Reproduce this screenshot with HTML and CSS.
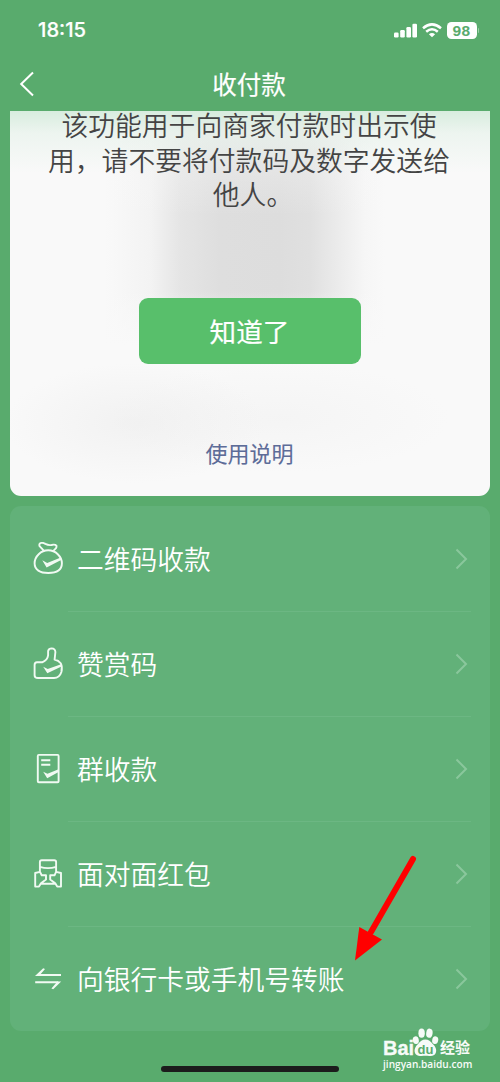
FILE: index.html
```html
<!DOCTYPE html>
<html lang="zh-CN">
<head>
<meta charset="utf-8">
<title>收付款</title>
<link rel="stylesheet" href="styles.css">
</head>
<body>
<div class="phone">
  <div class="status">
    <span class="time">18:15</span>
    <div class="indicators">
      <svg class="signal" width="24" height="15" viewBox="0 0 24 15" fill="#fff"><rect x="0" y="9.5" width="4.6" height="5" rx="1.2"/><rect x="6.2" y="7" width="4.6" height="7.5" rx="1.2"/><rect x="12.4" y="4" width="4.6" height="10.5" rx="1.2"/><rect x="18.4" y="0.8" width="4.6" height="13.7" rx="1.2"/></svg>
      <svg class="wifi" width="20" height="15" viewBox="0 0 20 15" fill="none" stroke="#fff" stroke-width="2.5"><path d="M1 5.2Q10 -2.5 19 5.2"/><path d="M4.2 8.8Q10 3.8 15.8 8.8"/><path d="M10 14.2L6.9 11.2Q10 8.8 13.1 11.2Z" fill="#fff" stroke="none"/></svg>
      <span class="battery">98</span>
      <span class="battery-cap"></span>
    </div>
  </div>
  <div class="navbar">
    <svg class="back" width="16" height="26" viewBox="0 0 16 26" fill="none" stroke="#fff" stroke-width="2"><path d="M14 1.5L2.2 13L14 24.5"/></svg>
    <h1 class="title">收付款</h1>
  </div>
  <section class="notice">
    <div class="message">
      <span class="line">该功能用于向商家付款时出示使</span>
      <span class="line">用，请不要将付款码及数字发送给</span>
      <span class="line last">他人。</span>
    </div>
    <button class="confirm">知道了</button>
    <a class="help">使用说明</a>
  </section>
  <section class="menu">
    <div class="row">
      <svg class="icon" viewBox="0 0 32 32"><path d="M11 8.8L6.6 4.2Q5.6 1.4 8.4 .9Q10.4 .6 12.4 1.9Q15.5 3.6 18.5 3Q22 2.1 23.4 3.6Q23.8 5 22.8 6.4L20.4 8.8M15.2 8.3C22.5 8.3 28.9 14.4 28.9 21.3C28.9 28 23.4 31 15.2 31S1.6 28 1.6 21.3C1.6 14.4 8 8.3 15.2 8.3Z"/><path class="solid" d="M9.3 18.3L14.2 21.1L27.8 15.6L28.6 17.8L13.6 25.6Z"/></svg>
      <span class="label">二维码收款</span>
      <svg class="chevron" viewBox="0 0 13 22"><path d="M1.5 1.5L11 11L1.5 20.5"/></svg>
    </div>
    <div class="row">
      <svg class="icon" viewBox="0 0 32 32"><path d="M4 15.3H9.2Q14.5 13 15.1 8.3V4Q15.8 1.4 18.7 1.4Q22.1 1.5 22.4 5L21.6 12.6Q25.5 13.3 27.7 16.2Q29.6 20 28.4 25Q26.5 31 21 31H5Q1.6 31 1.6 28.2V18Q1.6 15.3 4 15.3Z"/><path class="solid" d="M10.2 19.8L14.7 22L28.1 17.2L28.5 19.4L14.3 26.3Z"/></svg>
      <span class="label">赞赏码</span>
      <svg class="chevron" viewBox="0 0 13 22"><path d="M1.5 1.5L11 11L1.5 20.5"/></svg>
    </div>
    <div class="row">
      <svg class="icon" viewBox="0 0 32 32"><rect x="4.8" y="2.9" width="20.8" height="27.4" rx="1"/><path d="M8.2 8.2H17.3M8.2 12.8H17.3"/><path class="solid" d="M10.2 19.8L14.5 21.8L25.6 17.3V20L14.2 26.2Z"/></svg>
      <span class="label">群收款</span>
      <svg class="chevron" viewBox="0 0 13 22"><path d="M1.5 1.5L11 11L1.5 20.5"/></svg>
    </div>
    <div class="row">
      <svg class="icon" viewBox="0 0 32 32"><path d="M6.9 16V5Q6.9 3.2 8.7 3.2H21.3Q23.1 3.2 23.1 5V16M6.9 9.8Q15 12.4 23.1 9.8M6.9 14.8L2.2 16V29.6H6L8 26.3L13 22.5V18.3H8.7L6.9 14.8M23.1 14.8L28 16V29.6H24.2L22.2 26.3L17.2 22.5V18.3H21.5L23.1 14.8M8 26.7H22.2"/></svg>
      <span class="label">面对面红包</span>
      <svg class="chevron" viewBox="0 0 13 22"><path d="M1.5 1.5L11 11L1.5 20.5"/></svg>
    </div>
    <div class="row">
      <svg class="icon" viewBox="0 0 32 32"><path d="M28 13H5.2M2.2 20.3H25.2" stroke-width="2"/><path class="solid" d="M2 13.9L10.2 6.2L12 7L6 13.9ZM28.2 19.4L20.2 27.2L18.4 26.5L24.4 19.4Z"/></svg>
      <span class="label">向银行卡或手机号转账</span>
      <svg class="chevron" viewBox="0 0 13 22"><path d="M1.5 1.5L11 11L1.5 20.5"/></svg>
    </div>
  </section>
  <svg class="pointer" width="64" height="108" viewBox="0 0 64 108"><path d="M60 6L18 79" stroke="#f00" stroke-width="6" stroke-linecap="round"/><path d="M2 107.5L6.3 74L29 86.4Z" fill="#f00"/></svg>
  <div class="brand">
    <div class="brand-name">
      <span class="brand-latin">Bai</span>
      <svg class="paw" width="27" height="29" viewBox="0 0 27 29" fill="#f7fbf8"><ellipse cx="3.8" cy="12.2" rx="3" ry="3.9" transform="rotate(-12 3.8 12.2)"/><ellipse cx="9.6" cy="5.2" rx="3.2" ry="4.6"/><ellipse cx="17.4" cy="5.2" rx="3.2" ry="4.6" transform="rotate(8 17.4 5.2)"/><ellipse cx="23.2" cy="12.2" rx="3" ry="3.9" transform="rotate(12 23.2 12.2)"/><path d="M13.4 11.5C16.6 11.5 18.5 13.5 21 16.2C24.8 19.8 25 24 22.8 26.4C20.4 28.6 16 27.8 13.4 27.8S6.4 28.6 4 26.4C1.8 24 2 19.8 5.8 16.2C8.3 13.5 10.2 11.5 13.4 11.5Z"/><text x="13.4" y="25.6" text-anchor="middle" class="paw-text">du</text></svg>
      <span class="brand-cn">经验</span>
    </div>
    <div class="brand-url">jingyan.baidu.com</div>
  </div>
  <div class="home-indicator"></div>
</div>
</body>
</html>
```
FILE: styles.css
```css
* { box-sizing: border-box; }
body { margin: 0; background: #59ab6d; font-family: "Noto Sans CJK SC", sans-serif; }
.phone { position: relative; width: 500px; height: 1082px; overflow: hidden; background: #59ab6d; }
.status { height: 60px; padding: 0 21px 0 38px; display: flex; align-items: center; justify-content: space-between; }
.time { font: 500 20.2px/24px Inter, sans-serif; color: #fff; -webkit-text-stroke: .2px #fff; }
.indicators { display: flex; align-items: center; }
.wifi { margin-left: 4px; }
.battery { width: 30px; height: 17px; margin-left: 5px; border-radius: 4.5px; background: #fff; color: #59ab6d; font: 700 15.5px/17px "Liberation Sans", sans-serif; letter-spacing: .4px; text-align: center; }
.battery-cap { width: 1.5px; height: 5px; margin-left: 1px; border-radius: 0 2px 2px 0; background: #9bcda6; }
.navbar { position: relative; height: 51px; display: flex; justify-content: center; align-items: center; }
.back { position: absolute; left: 19px; top: 11px; }
.title { margin: 0; padding: 0 2px 4px 0; font-size: 24.5px; line-height: 36px; font-weight: 400; color: #fff; -webkit-text-stroke: .2px #fff; }
.notice {
  width: 480px; height: 385px; margin-left: 10px; border-radius: 0 0 11px 11px;
  display: flex; flex-direction: column; align-items: center;
  background:
    linear-gradient(to bottom, rgba(214, 236, 221, .95), rgba(225, 240, 230, .5) 22px, rgba(249, 249, 249, 0) 62px),
    radial-gradient(ellipse 130px 60px at 125px 312px, rgba(230, 230, 230, .4), rgba(249, 249, 249, 0)),
    radial-gradient(ellipse 170px 55px at 270px 307px, rgba(234, 234, 234, .3), rgba(249, 249, 249, 0)),
    linear-gradient(to bottom, rgba(249, 249, 249, .7), rgba(249, 249, 249, .35) 45px, rgba(249, 249, 249, 0) 105px, rgba(249, 249, 249, 0) 180px, #f9f9f9 235px),
    linear-gradient(to right, #f9f9f9 95px, #f3f3f3 140px, #e5e5e5 170px, #dedede 210px, #dddddd 270px, #e0e0e0 300px, #ececec 330px, #f6f6f6 355px, #f9f9f9 375px);
}
.message { height: 104px; margin-top: -3px; display: flex; flex-direction: column; align-items: center; color: #444; font-size: 26.8px; font-weight: 350; }
.line { height: 34.5px; padding-right: 2px; line-height: 34.5px; white-space: nowrap; }
.last { padding: 0 0 0 6px; }
.confirm { width: 222px; height: 66px; margin-top: 86px; padding: 0 1px 0 0; border: 0; border-radius: 9px; background: #58bf6b; color: #fff; font: 400 26.6px/38px "Noto Sans CJK SC", sans-serif; -webkit-text-stroke: .2px #fff; }
.help { margin-top: 72px; padding-right: 1px; color: #5d6c98; font-size: 22px; line-height: 32px; font-weight: 400; -webkit-text-stroke: .1px #5d6c98; }
.menu { width: 480px; height: 525px; margin: 10px 0 0 10px; border-radius: 11px; background: #62b179; }
.row { position: relative; height: 105px; padding: 0 22px 0 23px; display: flex; align-items: center; }
.row:not(:last-child)::after { content: ""; position: absolute; left: 58px; right: 19px; bottom: -1px; height: 1px; background: #6cb783; }
.icon { width: 32px; height: 32px; margin-top: -2px; flex: none; fill: none; stroke: #f1faf3; stroke-width: 1.9; stroke-linejoin: round; }
.icon .solid { fill: #f1faf3; stroke: none; }
.label { margin-left: 12px; font-size: 26.75px; line-height: 38px; font-weight: 350; color: #fff; white-space: nowrap; }
.chevron { width: 13px; height: 22px; margin-left: auto; fill: none; stroke: #8ac79c; stroke-width: 2; }
.pointer { position: absolute; left: 353px; top: 853px; }
.brand { position: absolute; left: 383px; top: 1028px; color: #f7fbf8; font-family: "Open Sans", sans-serif; }
.brand-name { display: flex; height: 29px; align-items: flex-end; }
.brand-latin { width: 31px; margin-bottom: -1px; font: 700 20px/20px "Liberation Sans", sans-serif; -webkit-text-stroke: .3px #f7fbf8; }
.paw { margin: 0 0 0 -2px; }
.paw-text { fill: #59ab6d; font: 700 13px "Liberation Sans", sans-serif; }
.brand-cn { margin: 0 0 -3px 1px; font: 700 15px/26px "Noto Sans CJK SC", sans-serif; }
.brand-url { font: 600 10.1px/15px "Open Sans", sans-serif; white-space: nowrap; }
.home-indicator { position: absolute; left: 161px; top: 1066px; width: 178px; height: 6px; border-radius: 3px; background: #1c1c1c; }
```
